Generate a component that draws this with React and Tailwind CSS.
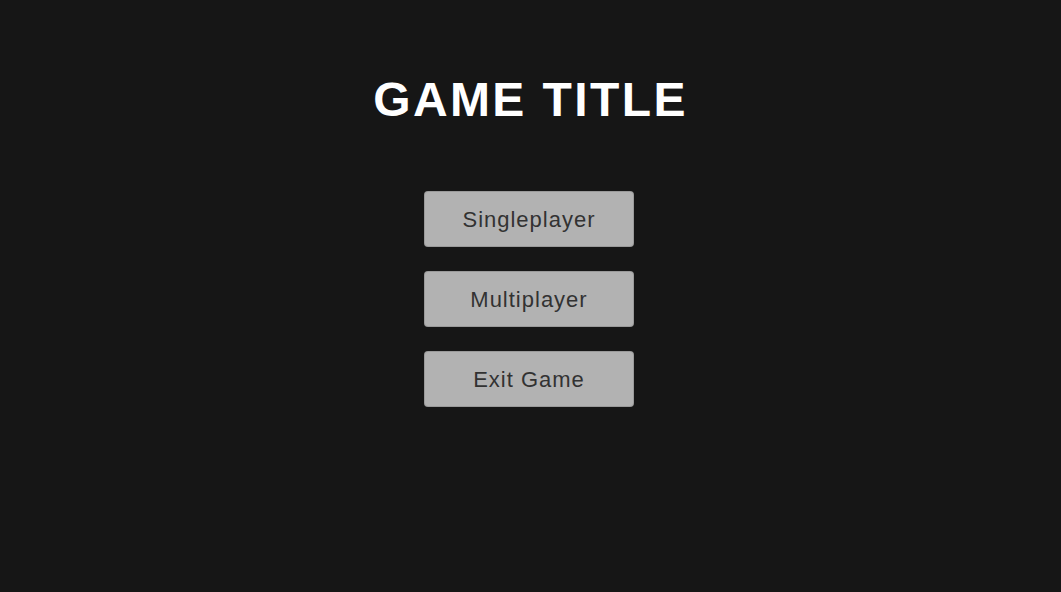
export default function App() {
  const buttons = ["Singleplayer", "Multiplayer", "Exit Game"];

  return (
    <div className="w-full h-screen bg-[#161616] flex flex-col items-center font-['Liberation_Sans',sans-serif]">
      {/* Title */}
      <h1 className="mt-[74px] h-[52px] leading-[52px] text-[48px] font-bold text-white tracking-[2.4px]">
        GAME TITLE
      </h1>

      {/* Menu */}
      <div className="mt-[65px] flex flex-col gap-6 pr-[3px]">
        {buttons.map((label) => (
          <button
            key={label}
            className="w-[210px] h-[56px] rounded-[4px] bg-[#b2b2b2] border border-[#8a8a8a]/60 text-[#323232] text-[22px] tracking-[1px]"
          >
            {label}
          </button>
        ))}
      </div>
    </div>
  );
}
